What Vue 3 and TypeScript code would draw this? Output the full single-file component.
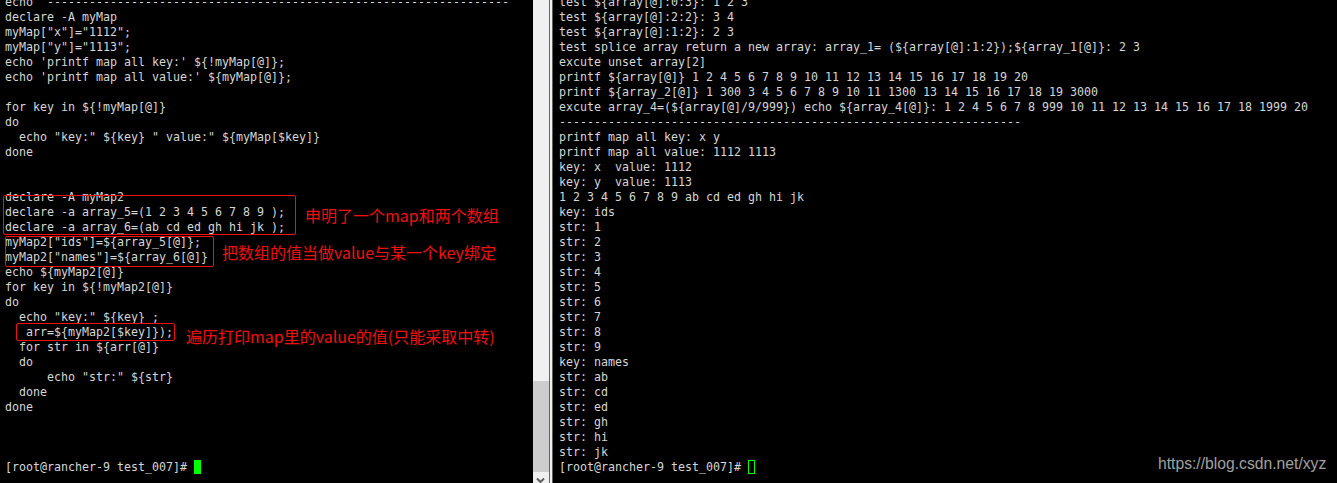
<script setup lang="ts">
const leftLines: string[] = [
  'echo  ------------------------------------------------------------------',
  'declare -A myMap',
  'myMap["x"]="1112";',
  'myMap["y"]="1113";',
  "echo 'printf map all key:' ${!myMap[@]};",
  "echo 'printf map all value:' ${myMap[@]};",
  '',
  'for key in ${!myMap[@]}',
  'do',
  '  echo "key:" ${key} " value:" ${myMap[$key]}',
  'done',
  '',
  '',
  'declare -A myMap2',
  'declare -a array_5=(1 2 3 4 5 6 7 8 9 );',
  'declare -a array_6=(ab cd ed gh hi jk );',
  'myMap2["ids"]=${array_5[@]};',
  'myMap2["names"]=${array_6[@]}',
  'echo ${myMap2[@]}',
  'for key in ${!myMap2[@]}',
  'do',
  '  echo "key:" ${key} ;',
  '   arr=${myMap2[$key]});',
  '  for str in ${arr[@]}',
  '  do',
  '      echo "str:" ${str}',
  '  done',
  'done',
  '',
  '',
  '',
]
const rightLines: string[] = [
  'test ${array[@]:0:3}: 1 2 3',
  'test ${array[@]:2:2}: 3 4',
  'test ${array[@]:1:2}: 2 3',
  'test splice array return a new array: array_1= (${array[@]:1:2});${array_1[@]}: 2 3',
  'excute unset array[2]',
  'printf ${array[@]} 1 2 4 5 6 7 8 9 10 11 12 13 14 15 16 17 18 19 20',
  'printf ${array_2[@]} 1 300 3 4 5 6 7 8 9 10 11 1300 13 14 15 16 17 18 19 3000',
  'excute array_4=(${array[@]/9/999}) echo ${array_4[@]}: 1 2 4 5 6 7 8 999 10 11 12 13 14 15 16 17 18 1999 20',
  '------------------------------------------------------------------',
  'printf map all key: x y',
  'printf map all value: 1112 1113',
  'key: x  value: 1112',
  'key: y  value: 1113',
  '1 2 3 4 5 6 7 8 9 ab cd ed gh hi jk',
  'key: ids',
  'str: 1',
  'str: 2',
  'str: 3',
  'str: 4',
  'str: 5',
  'str: 6',
  'str: 7',
  'str: 8',
  'str: 9',
  'key: names',
  'str: ab',
  'str: cd',
  'str: ed',
  'str: gh',
  'str: hi',
  'str: jk',
]
const prompt = '[root@rancher-9 test_007]# '
</script>

<template>
  <div class="screen">
    <section class="term left">
      <div class="rows">
        <pre v-for="(l, i) in leftLines" :key="i" class="line">{{ l }}</pre>
        <pre class="line"><span>{{ prompt }}</span><i class="cursor solid"></i></pre>
      </div>
      <div class="box b1"></div>
      <div class="box b2"></div>
      <div class="box b3"></div>
      <div class="note n1">申明了一个map和两个数组</div>
      <div class="note n2">把数组的值当做value与某一个key绑定</div>
      <div class="note n3">遍历打印map里的value的值(只能采取中转)</div>
    </section>
    <aside class="scroll">
      <div class="track"><div class="thumb"></div></div>
      <svg class="arrow" width="16" height="11" viewBox="0 0 16 11"><path d="M4 6.500l3.500 3.500 3.500-3.500" fill="none" stroke="#606060" stroke-width="2"/></svg>
    </aside>
    <div class="divider"></div>
    <section class="term right">
      <div class="rows">
        <pre v-for="(l, i) in rightLines" :key="i" class="line">{{ l }}</pre>
        <pre class="line"><span>{{ prompt }}</span><i class="cursor hollow"></i></pre>
      </div>
      <div class="mark">https://blog.csdn.net/xyz</div>
    </section>
  </div>
</template>

<style>
html, body { margin: 0; background: #000; overflow: hidden; }
</style>

<style scoped>
.screen {
  display: flex;
  width: 1337px;
  height: 483px;
  overflow: hidden;
  background: #000;
}
.term {
  position: relative;
  box-sizing: border-box;
  background: #000;
  color: #d6d6d6;
  font-family: "DejaVu Sans Mono", "Liberation Mono", monospace;
  font-size: 11.63px;
  overflow: hidden;
}
.left { width: 533px; padding-left: 5px; }
.right { flex: 1; padding-left: 6px; }
.rows { margin-top: -5.5px; }
.line {
  margin: 0;
  height: 15px;
  line-height: 15px;
  white-space: pre;
}
.scroll {
  width: 16px;
  display: flex;
  flex-direction: column;
  background: #f0f0f0;
}
.arrow { display: block; flex: none; }
.track { flex: 1; display: flex; flex-direction: column; justify-content: flex-end; }
.thumb { height: 91px; background: #cdcdcd; }
.divider {
  box-sizing: border-box;
  width: 4px;
  background: #f0f0f0;
  border-left: 1px solid #1c78c0;
  border-right: 1px solid #606060;
}
.cursor { display: inline-block; width: 7px; height: 14px; vertical-align: -3px; }
.cursor.solid { background: #00ff00; }
.cursor.hollow { box-sizing: border-box; border: 1px solid #00ff00; }
.box { position: absolute; border: 1px solid #f01010; border-radius: 2px; box-sizing: border-box; }
.b1 { left: 3px; top: 195px; width: 293px; height: 40px; }
.b2 { left: 5px; top: 236px; width: 209px; height: 31px; }
.b3 { left: 16px; top: 323px; width: 159px; height: 18px; }
.note {
  position: absolute;
  color: #f01010;
  font-family: "Noto Sans CJK SC", "Noto Sans", sans-serif;
  font-size: 16px;
  line-height: 20px;
  white-space: nowrap;
}
.n1 { left: 305px; top: 205px; }
.n2 { left: 222px; top: 242px; }
.n3 { left: 186px; top: 326px; }
.mark {
  position: absolute;
  left: 605px;
  top: 455px;
  color: #a0a0a0;
  font-family: "Liberation Sans", Arial, sans-serif;
  font-size: 15.7px;
  line-height: 18px;
  white-space: nowrap;
}
</style>
